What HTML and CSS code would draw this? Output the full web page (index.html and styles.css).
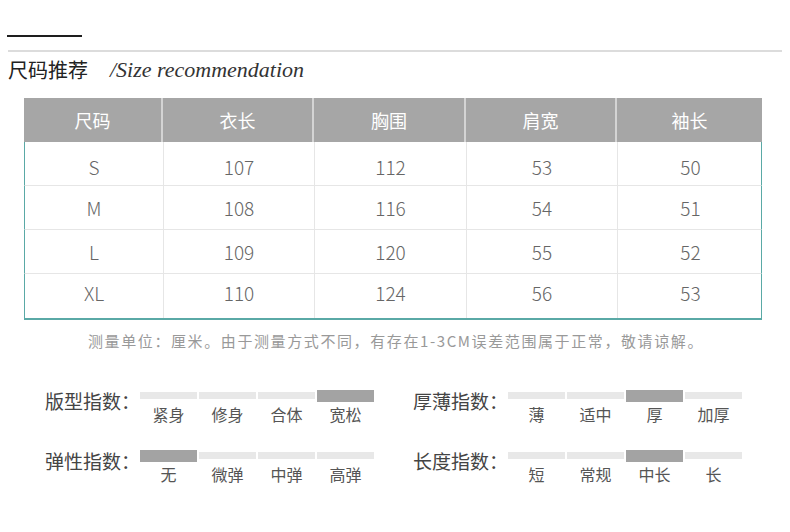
FILE: index.html
```html
<!DOCTYPE html>
<html lang="zh">
<head>
<meta charset="utf-8">
<link rel="stylesheet" href="styles.css">
</head>
<body>
<div class="page">
  <div class="rule-dark"></div>
  <div class="rule-light"></div>
  <div class="title">
    <span class="title-cn">尺码推荐</span>
    <span class="title-en">/Size recommendation</span>
  </div>

  <div class="size-table">
    <div class="row head">
      <div class="cell">尺码</div>
      <div class="cell">衣长</div>
      <div class="cell">胸围</div>
      <div class="cell">肩宽</div>
      <div class="cell">袖长</div>
    </div>
    <div class="row first">
      <div class="cell">S</div><div class="cell">107</div><div class="cell">112</div><div class="cell">53</div><div class="cell">50</div>
    </div>
    <div class="row">
      <div class="cell">M</div><div class="cell">108</div><div class="cell">116</div><div class="cell">54</div><div class="cell">51</div>
    </div>
    <div class="row">
      <div class="cell">L</div><div class="cell">109</div><div class="cell">120</div><div class="cell">55</div><div class="cell">52</div>
    </div>
    <div class="row last">
      <div class="cell">XL</div><div class="cell">110</div><div class="cell">124</div><div class="cell">56</div><div class="cell">53</div>
    </div>
  </div>

  <p class="note">测量单位：厘米。由于测量方式不同，有存在1-3CM误差范围属于正常，敬请谅解。</p>

  <div class="indices">
    <div class="idx">
      <div class="idx-label">版型指数：</div>
      <div class="scale">
        <div class="seg"><span class="bar"></span><span class="txt">紧身</span></div>
        <div class="seg"><span class="bar"></span><span class="txt">修身</span></div>
        <div class="seg"><span class="bar"></span><span class="txt">合体</span></div>
        <div class="seg on"><span class="bar"></span><span class="txt">宽松</span></div>
      </div>
    </div>
    <div class="idx">
      <div class="idx-label">厚薄指数：</div>
      <div class="scale">
        <div class="seg"><span class="bar"></span><span class="txt">薄</span></div>
        <div class="seg"><span class="bar"></span><span class="txt">适中</span></div>
        <div class="seg on"><span class="bar"></span><span class="txt">厚</span></div>
        <div class="seg"><span class="bar"></span><span class="txt">加厚</span></div>
      </div>
    </div>
    <div class="idx">
      <div class="idx-label">弹性指数：</div>
      <div class="scale">
        <div class="seg on"><span class="bar"></span><span class="txt">无</span></div>
        <div class="seg"><span class="bar"></span><span class="txt">微弹</span></div>
        <div class="seg"><span class="bar"></span><span class="txt">中弹</span></div>
        <div class="seg"><span class="bar"></span><span class="txt">高弹</span></div>
      </div>
    </div>
    <div class="idx">
      <div class="idx-label">长度指数：</div>
      <div class="scale">
        <div class="seg"><span class="bar"></span><span class="txt">短</span></div>
        <div class="seg"><span class="bar"></span><span class="txt">常规</span></div>
        <div class="seg on"><span class="bar"></span><span class="txt">中长</span></div>
        <div class="seg"><span class="bar"></span><span class="txt">长</span></div>
      </div>
    </div>
  </div>
</div>
</body>
</html>
```

FILE: styles.css
```css
* { box-sizing: border-box; }
html, body { margin: 0; padding: 0; background: #fff; }
body {
  width: 790px;
  height: 532px;
  overflow: hidden;
  font-family: "Noto Sans CJK SC", "Noto Sans", sans-serif;
  color: #444;
}
.page { padding-top: 35px; }
.rule-dark {
  margin-left: 7px;
  width: 75px;
  height: 2px;
  background: #1e1e1e;
}
.rule-light {
  margin: 13px 0 0 8px;
  width: 774px;
  height: 2px;
  background: #dcdcdc;
}
.title {
  margin: 6px 0 0 8px;
  height: 24px;
  display: flex;
  align-items: center;
  gap: 22px;
}
.title-cn {
  font-size: 20px;
  line-height: 24px;
  color: #222;
}
.title-en {
  font-family: "Liberation Serif", serif;
  font-style: italic;
  font-size: 22px;
  line-height: 24px;
  color: #333;
}

.size-table {
  margin: 16px 0 0 24px;
  width: 738px;
}
.row {
  display: grid;
  grid-template-columns: 139px 151px 152px 151px 145px;
  height: 44px;
  border-left: 1.5px solid #5aa9a6;
  border-right: 1.5px solid #5aa9a6;
  border-bottom: 1px solid #e6e6e6;
}
.row.head {
  background: #a6a6a6;
  border: none;
}
.row.first .cell { padding-top: 5px; }
.row.last {
  border-bottom: 2px solid #5aa9a6;
  height: 46px;
}
.row.last .cell { padding-bottom: 8px; }
.cell {
  display: flex;
  align-items: center;
  justify-content: center;
  font-size: 19px;
  font-weight: 300;
  color: #666;
  border-right: 1px solid #e6e6e6;
}
.cell:last-child { border-right: none; }
.head .cell {
  color: #fff;
  font-size: 18px;
  font-weight: 400;
  border-right: 2px solid #d4d4d4;
}
.head .cell:last-child { border-right: none; }

.note {
  margin: 11px 0 0 0;
  text-align: center;
  font-size: 15px;
  line-height: 20px;
  letter-spacing: 1.6px;
  color: #999;
  padding-left: 2px;
}

.indices {
  margin: 39px 0 0 45px;
  display: grid;
  grid-template-columns: 368px 360px;
  row-gap: 26px;
}
.idx {
  display: flex;
  align-items: flex-start;
}
.idx-label {
  width: 95px;
  font-size: 19px;
  line-height: 24px;
  margin-top: -1px;
  color: #444;
  white-space: nowrap;
}
.scale {
  display: grid;
  grid-template-columns: repeat(4, 57px);
  column-gap: 2px;
}
.seg {
  display: flex;
  flex-direction: column;
  align-items: center;
}
.bar {
  display: block;
  width: 100%;
  height: 12px;
  background: linear-gradient(#fff 0 2px, #e8e8e8 2px 9px, #fff 9px);
}
.seg.on .bar { background: #a3a3a3; }
.txt {
  margin-top: 2px;
  font-size: 16px;
  line-height: 20px;
  color: #555;
}
```
